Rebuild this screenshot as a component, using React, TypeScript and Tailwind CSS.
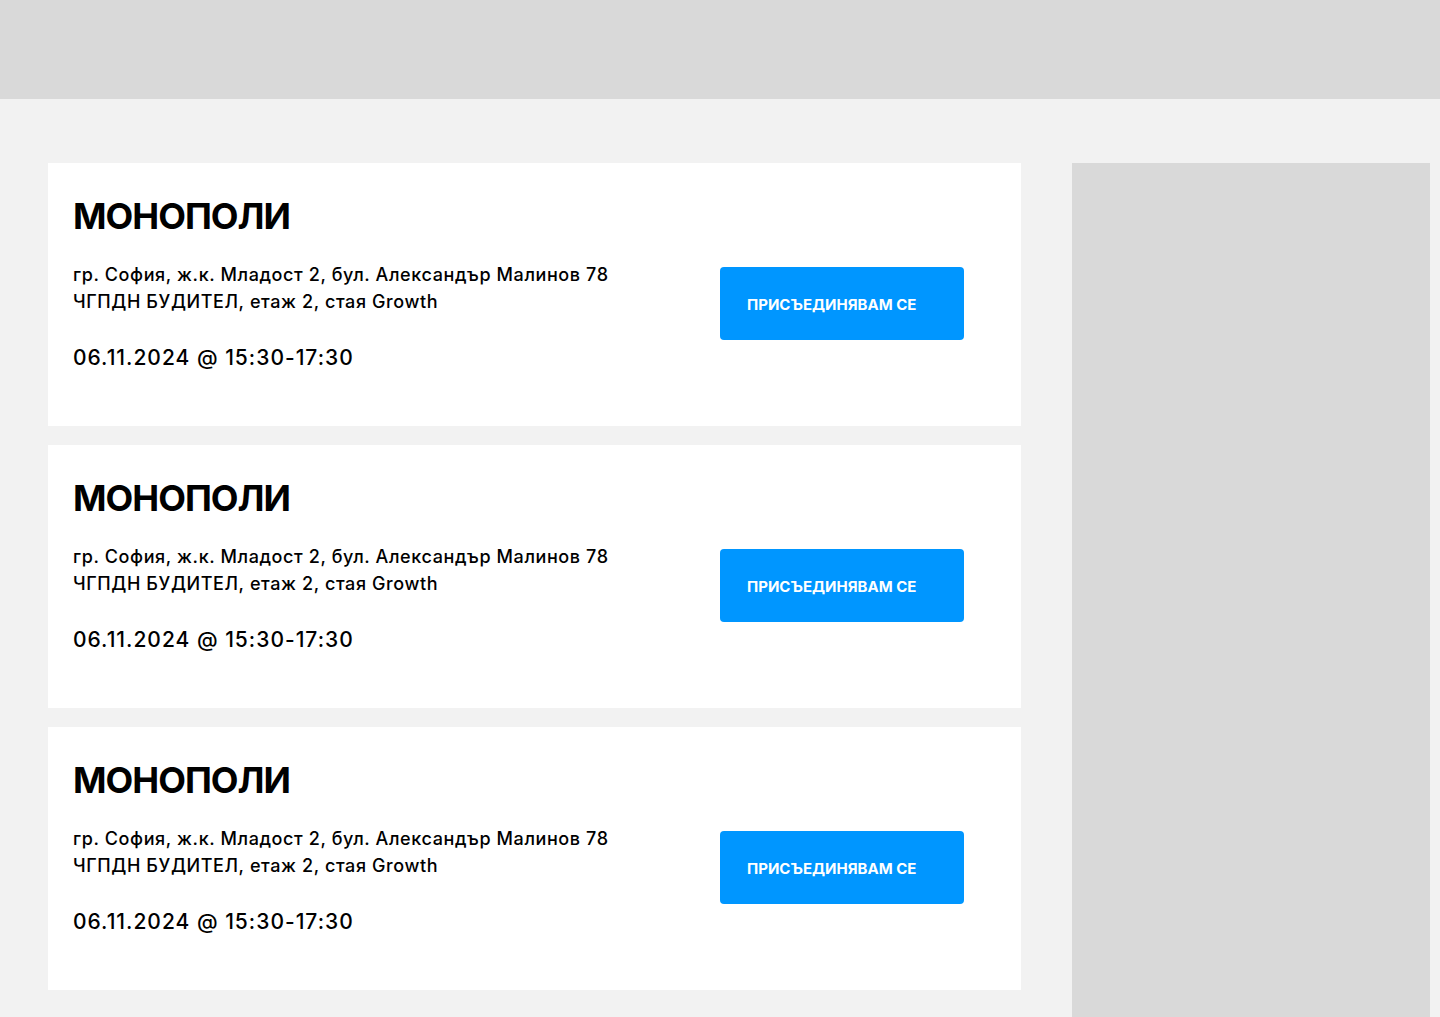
const events = [1, 2, 3].map((id) => ({
  id,
  title: "МОНОПОЛИ",
  address: "гр. София, ж.к. Младост 2, бул. Александър Малинов 78",
  room: "ЧГПДН БУДИТЕЛ, етаж 2, стая Growth",
  date: "06.11.2024 @ 15:30-17:30",
}));

const EventCard = ({ event }: { event: (typeof events)[number] }) => (
  <div className="flex items-start justify-between bg-white pl-[25px] pr-[57px] pt-[31px] pb-[53px]">
    <div className="flex flex-col">
      <h2 className="text-[36px] leading-[44px] font-bold tracking-[-1px] text-black">
        {event.title}
      </h2>
      <p className="mt-[23px] text-[18px] leading-[27px] font-medium tracking-[0.6px] text-black">
        {event.address}
        <br />
        {event.room}
      </p>
      <p className="mt-[28px] text-[21px] leading-[30px] font-medium tracking-[1px] text-black">
        {event.date}
      </p>
    </div>
    <button className="mt-[73px] flex h-[73px] w-[244px] items-center rounded-[4px] bg-[#0096ff] pt-[4px] pl-[27px] text-[15px] font-bold text-white">
      ПРИСЪЕДИНЯВАМ СЕ
    </button>
  </div>
);

export default function App() {
  return (
    <div
      className="min-h-screen bg-[#f2f2f2]"
      style={{ fontFamily: "Inter, 'Noto Sans', sans-serif" }}
    >
      <header className="h-[99px] bg-[#d9d9d9]" />
      <main className="flex gap-[51px] pt-[64px] pl-[48px]">
        <div className="flex w-[973px] flex-col gap-[19px]">
          {events.map((e) => (
            <EventCard key={e.id} event={e} />
          ))}
        </div>
        <aside className="h-[854px] w-[358px] bg-[#d9d9d9]" />
      </main>
    </div>
  );
}
